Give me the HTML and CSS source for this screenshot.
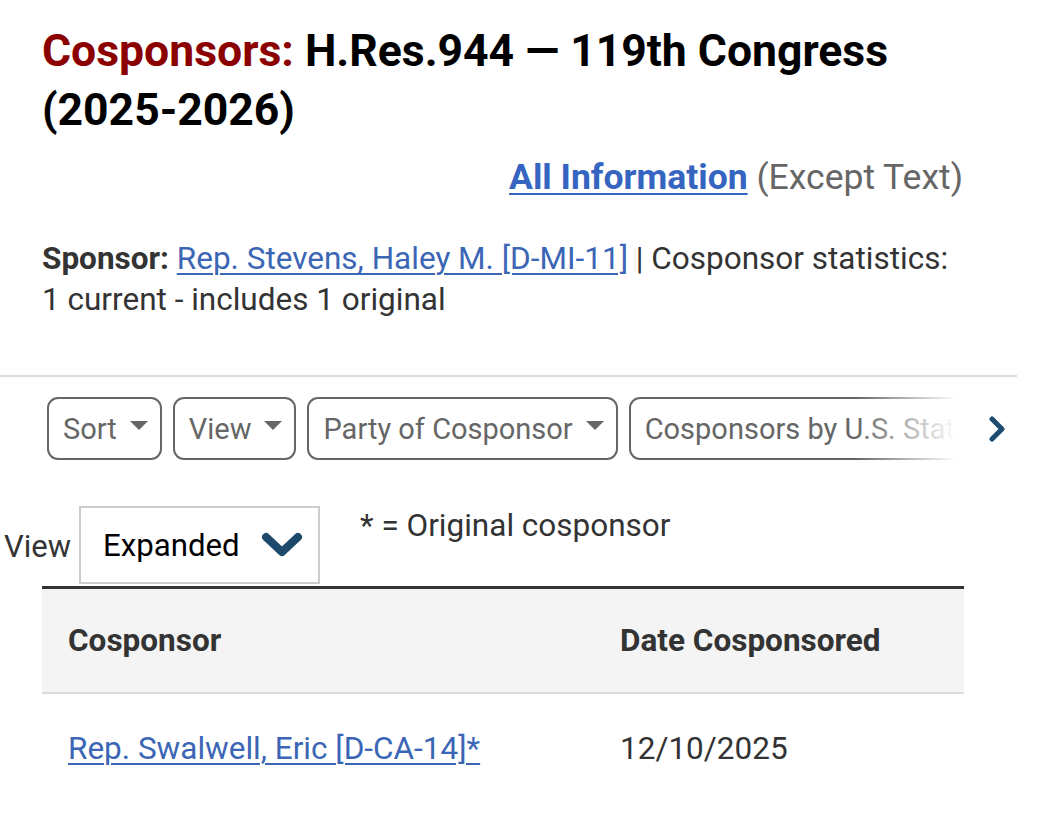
FILE: index.html
```html
<!DOCTYPE html>
<html>
<head>
<meta charset="utf-8">
<link rel="stylesheet" href="styles.css">
</head>
<body>
<div class="page">
  <header class="head">
    <h1 class="title"><span class="title-label">Cosponsors:</span> H.Res.944 — 119th Congress <span class="nowrap">(2025-2026)</span></h1>
    <p class="all-info"><a href="#" class="link-strong">All Information</a> (Except Text)</p>
    <p class="sponsor"><b>Sponsor:</b> <a href="#" class="link">Rep. Stevens, Haley M. [D-MI-11]</a> | Cosponsor statistics: 1 current - includes 1 original</p>
  </header>
  <hr class="rule">
  <div class="filters">
    <div class="filter-track">
      <button class="filter">Sort <span class="caret"></span></button>
      <button class="filter">View <span class="caret"></span></button>
      <button class="filter">Party of Cosponsor <span class="caret"></span></button>
      <button class="filter filter-last">Cosponsors by U.S. State <span class="caret"></span></button>
      <div class="fade"></div>
    </div>
    <svg class="next" width="20" height="26" viewBox="0 0 20 26"><path d="M4 3 L14 13 L4 23" fill="none" stroke="#1e4b70" stroke-width="5" stroke-linejoin="round" stroke-linecap="round"/></svg>
  </div>
  <div class="view-row">
    <span class="view-label">View</span>
    <div class="select">Expanded
      <svg class="chev" width="42" height="28" viewBox="0 0 42 28"><path d="M5 6 L21 21 L37 6" fill="none" stroke="#1d4a6b" stroke-width="8" stroke-linejoin="round" stroke-linecap="round"/></svg>
    </div>
    <span class="legend">* = Original cosponsor</span>
  </div>
  <table class="tbl">
    <thead>
      <tr><th class="c1">Cosponsor</th><th>Date Cosponsored</th></tr>
    </thead>
    <tbody>
      <tr><td class="c1"><a href="#" class="link">Rep. Swalwell, Eric [D-CA-14]*</a></td><td>12/10/2025</td></tr>
    </tbody>
  </table>
</div>
</body>
</html>
```

FILE: styles.css
```css
* { box-sizing: border-box; }
html, body { margin: 0; padding: 0; background: #fff; }
body { font-family: Roboto, "Liberation Sans", sans-serif; color: #333; }
.page { width: 1017px; }
.head { padding: 0 54px 0 42px; }
.title { margin: 0; padding-top: 22px; font-size: 44.5px; line-height: 59px; font-weight: 700; color: #000; }
.nowrap { white-space: nowrap; }
.title-label { color: #8b0000; }
.all-info { margin: 14px 0 0; text-align: right; font-size: 35.5px; line-height: 46px; color: #666; }
.link-strong { color: #3565c0; font-weight: 700; text-decoration: underline; text-decoration-thickness: 2px; text-underline-offset: 4px; }
.link { color: #3b66b5; text-decoration: underline; text-decoration-thickness: 2px; text-underline-offset: 4px; }
.sponsor { margin: 38px 0 0; font-size: 31.5px; line-height: 41px; color: #333; }
.sponsor b { color: #333; }
.rule { margin: 55px 0 0; border: 0; border-top: 2px solid #dcdcdc; height: 0; }
.filters { display: flex; align-items: center; padding: 20px 0 0 47px; }
.filter-track { position: relative; display: flex; gap: 11px; width: 928px; overflow: hidden; }
.filter { flex: none; display: flex; align-items: center; gap: 13px; height: 63px; padding: 0 12px 0 14px; border: 2px solid #666; border-radius: 11px; background: #fff; font-family: Roboto, sans-serif; font-size: 29px; color: #666; }
.caret { width: 0; height: 0; border-left: 9px solid transparent; border-right: 9px solid transparent; border-top: 9px solid #666; margin-top: -6px; }
.fade { position: absolute; top: 0; right: 0; width: 120px; height: 100%; background: linear-gradient(to right, rgba(255,255,255,0), #fff 85%); }
.next { margin-left: 13px; }
.view-row { display: flex; align-items: flex-start; margin-top: 46px; padding-left: 4px; }
.view-label { font-size: 31px; color: #333; margin-top: 22px; }
.select { display: flex; align-items: center; gap: 21px; width: 241px; height: 78px; margin-left: 8px; padding-left: 22px; border: 2px solid #ccc; font-size: 31.2px; color: #000; }
.legend { margin-left: 40px; margin-top: 1px; font-size: 31.5px; color: #333; }
.tbl { margin-left: 42px; margin-top: 2px; width: 922px; border-collapse: collapse; border-top: 3px solid #333; font-size: 31.5px; }
.tbl thead tr { background: #f4f4f4; border-bottom: 2px solid #dcdcdc; }
.tbl th { text-align: left; font-weight: 700; color: #333; height: 105px; padding: 0; }
.tbl td { height: 110px; padding: 0; color: #333; }
.c1 { width: 578px; padding-left: 26px !important; }
```
